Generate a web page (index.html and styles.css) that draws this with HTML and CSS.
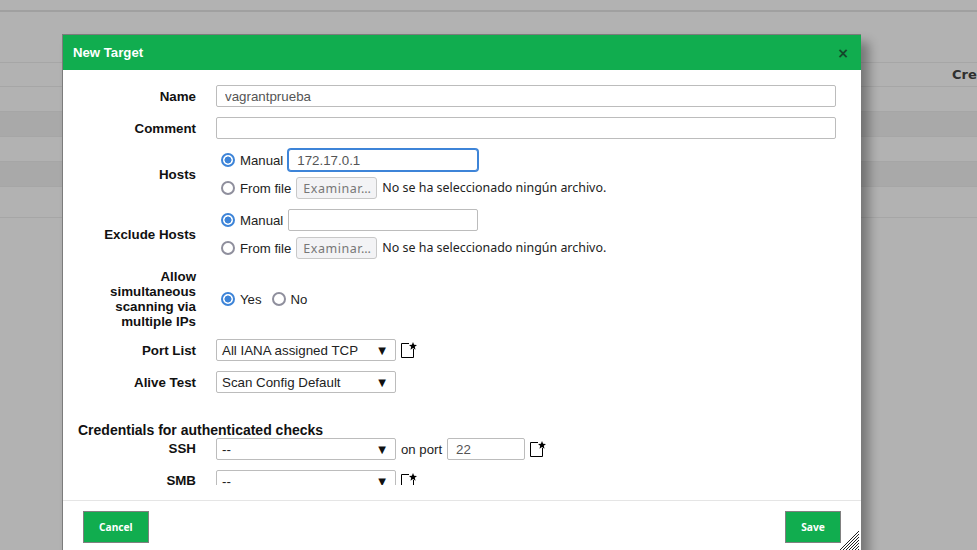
FILE: index.html
```html
<!DOCTYPE html>
<html lang="en">
<head>
  <meta charset="UTF-8">
  <title>New Target</title>
  <link rel="stylesheet" href="styles.css">
</head>
<body>
  <svg class="sprite" width="0" height="0">
    <symbol id="new-icon" viewBox="0 0 16 16">
      <path d="M8 1.5H0.5V15.5H12.5V7" fill="none" stroke="#000" stroke-width="1"/>
      <polygon points="12,0 13.1,2.7 16,2.9 13.8,4.8 14.5,7.7 12,6.1 9.5,7.7 10.2,4.8 8,2.9 10.9,2.7" fill="#000"/>
    </symbol>
  </svg>

  <div class="page">
    <div class="page-top"></div>
    <div class="table-head"><span>Cred</span></div>
    <div class="table-row"></div>
    <div class="table-row odd"></div>
    <div class="table-row"></div>
    <div class="table-row odd"></div>
    <div class="table-row tall"></div>
  </div>
  <div class="overlay"></div>

  <div class="dialog">
    <div class="dialog-title">
      <span>New Target</span>
      <span class="close">×</span>
    </div>
    <div class="dialog-content">
      <div class="row">
        <label class="label">Name</label>
        <input class="text wide" type="text" value="vagrantprueba">
      </div>
      <div class="row">
        <label class="label">Comment</label>
        <input class="text wide" type="text">
      </div>
      <div class="row">
        <label class="label">Hosts</label>
        <div class="stack">
          <div class="line">
            <input class="radio" type="radio" name="hosts" checked>
            <span>Manual</span>
            <input class="text hosts focus" type="text" value="172.17.0.1">
          </div>
          <div class="line">
            <input class="radio" type="radio" name="hosts">
            <span>From file</span>
            <span class="file-btn">Examinar…</span>
            <span class="file-name">No se ha seleccionado ningún archivo.</span>
          </div>
        </div>
      </div>
      <div class="row">
        <label class="label">Exclude Hosts</label>
        <div class="stack">
          <div class="line">
            <input class="radio" type="radio" name="exclude" checked>
            <span>Manual</span>
            <input class="text hosts" type="text">
          </div>
          <div class="line">
            <input class="radio" type="radio" name="exclude">
            <span>From file</span>
            <span class="file-btn">Examinar…</span>
            <span class="file-name">No se ha seleccionado ningún archivo.</span>
          </div>
        </div>
      </div>
      <div class="row">
        <label class="label">Allow simultaneous scanning via multiple IPs</label>
        <div class="line">
          <input class="radio" type="radio" name="multi" checked>
          <span class="choice">Yes</span>
          <input class="radio" type="radio" name="multi">
          <span>No</span>
        </div>
      </div>
      <div class="row">
        <label class="label">Port List</label>
        <div class="select"><span>All IANA assigned TCP</span><span class="arrow">▼</span></div>
        <svg class="icon"><use href="#new-icon"/></svg>
      </div>
      <div class="row">
        <label class="label">Alive Test</label>
        <div class="select"><span>Scan Config Default</span><span class="arrow">▼</span></div>
      </div>
      <h3 class="heading">Credentials for authenticated checks</h3>
      <div class="row cred">
        <label class="label">SSH</label>
        <div class="select"><span>--</span><span class="arrow">▼</span></div>
        <span>on port</span>
        <input class="text port" type="text" value="22">
        <svg class="icon"><use href="#new-icon"/></svg>
      </div>
      <div class="row cred">
        <label class="label">SMB</label>
        <div class="select"><span>--</span><span class="arrow">▼</span></div>
        <svg class="icon"><use href="#new-icon"/></svg>
      </div>
    </div>
    <div class="dialog-footer">
      <button class="btn">Cancel</button>
      <button class="btn">Save</button>
    </div>
    <svg class="resize" width="20" height="20" viewBox="0 0 20 20">
      <path d="M0 20L20 0M3 20L20 3M6 20L20 6M9 20L20 9M12 20L20 12M15 20L20 15M18 20L20 18" stroke="#222" stroke-width="1" fill="none"/>
    </svg>
  </div>
</body>
</html>
```

FILE: styles.css
```css
* {
  box-sizing: border-box;
}
html, body {
  height: 100%;
}
body {
  margin: 0;
  overflow: hidden;
  background: #fff;
  font-family: "Liberation Sans", Arial, sans-serif;
  font-size: 13.2px;
  color: #222;
}
.sprite {
  position: absolute;
}

/* page behind the dialog */
.page-top {
  height: 12px;
  border-bottom: 2px solid #e6e6e6;
  margin-bottom: 50px;
}
.table-head {
  height: 25px;
  border-top: 1px solid #eee;
  border-bottom: 1px solid #eee;
  font: bold 13px "DejaVu Sans", sans-serif;
  line-height: 23px;
  overflow: hidden;
  padding-left: 952px;
  white-space: nowrap;
  color: #444;
}
.table-head span {
  display: block;
  text-align: left;
}
.table-row {
  height: 25px;
  border-bottom: 1px solid #eee;
}
.table-row.odd {
  background: #f3f3f3;
}
.table-row.tall {
  height: 31px;
}
.overlay {
  position: absolute;
  inset: 0;
  background: rgba(0, 0, 0, .3);
}

/* dialog */
.dialog {
  position: absolute;
  left: 62px;
  top: 34px;
  width: 799px;
  height: 530px;
  background: #fff;
  border: 1px solid #7c7c7c;
  border-right: 0;
  box-shadow: 8px 8px 10px rgba(0, 0, 0, .33);
}
.dialog-title {
  display: flex;
  justify-content: space-between;
  align-items: center;
  height: 35px;
  padding: 0 12px 0 10px;
  background: #11ad4f;
  color: #fff;
  font-weight: bold;
  font-size: 13.2px;
}
.close {
  font: bold 14px "DejaVu Sans", sans-serif;
  color: #14472a;
}
.dialog-content {
  height: 415px;
  overflow: hidden;
  padding: 15px 15px 0;
}
.dialog-footer {
  display: flex;
  justify-content: space-between;
  margin-top: 15px;
  padding: 10px 20px;
  border-top: 1px solid #e5e5e5;
}
.resize {
  position: absolute;
  right: 2px;
  top: 496px;
}

/* form rows */
.row {
  display: flex;
  align-items: center;
  gap: 5px;
  margin-bottom: 10px;
}
.label {
  flex: none;
  width: 118px;
  margin-right: 15px;
  text-align: right;
  font-weight: bold;
  font-size: 13.33px;
  line-height: 15px;
  color: #111;
}
.cred .label {
  padding-bottom: 2px;
}
.stack {
  display: flex;
  flex-direction: column;
  gap: 6px;
}
.line {
  display: flex;
  align-items: center;
  height: 22px;
  padding-left: 5px;
  gap: 5px;
}
.heading {
  margin: 29px 0 0;
  font-size: 14px;
  line-height: 16px;
  color: #111;
}

/* controls */
.text {
  height: 22px;
  padding: 0 8px;
  border: 1px solid #bcbcbc;
  border-radius: 2px;
  background: #fff;
  font: 13.33px "Liberation Sans", Arial, sans-serif;
  color: #555;
  outline: 0;
}
.wide {
  width: 620px;
}
.hosts {
  width: 190px;
}
.port {
  width: 78px;
}
.focus {
  border-color: #3d84d8;
  border-radius: 3px;
  box-shadow: 0 0 0 1px #3d84d8;
}
.radio {
  appearance: none;
  flex: none;
  width: 14px;
  height: 14px;
  margin: 0;
  border: 2px solid #8f8f9d;
  border-radius: 50%;
  background: #fff;
}
.radio:checked {
  border-color: #3d84d8;
  background: radial-gradient(circle, #3d84d8 0 3.2px, #fff 3.8px);
}
.choice {
  margin-right: 5px;
}
.file-btn {
  flex: none;
  width: 81px;
  height: 22px;
  padding: 0 6px;
  border: 1px solid #c8c8c8;
  border-radius: 3px;
  background: #f3f3f5;
  font: 12.5px/21px "Noto Sans", sans-serif;
  letter-spacing: .55px;
  white-space: nowrap;
  color: #777;
}
.file-name {
  font: 12.45px/22px "Noto Sans", sans-serif;
}
.select {
  display: flex;
  justify-content: space-between;
  align-items: center;
  flex: none;
  width: 180px;
  height: 22px;
  padding: 0 9px 0 5px;
  border: 1px solid #bcbcbc;
  border-radius: 2px;
  font-size: 13.33px;
  color: #222;
}
.arrow {
  font: 10px "DejaVu Sans", sans-serif;
  color: #111;
}
.icon {
  flex: none;
  width: 16px;
  height: 16px;
}

/* buttons */
.btn {
  height: 32px;
  min-width: 56px;
  padding: 0 15px;
  border: 1px solid #808080;
  background: #11ad4f;
  color: #fff;
  font: bold 10.2px "Noto Sans", sans-serif;
}
```
